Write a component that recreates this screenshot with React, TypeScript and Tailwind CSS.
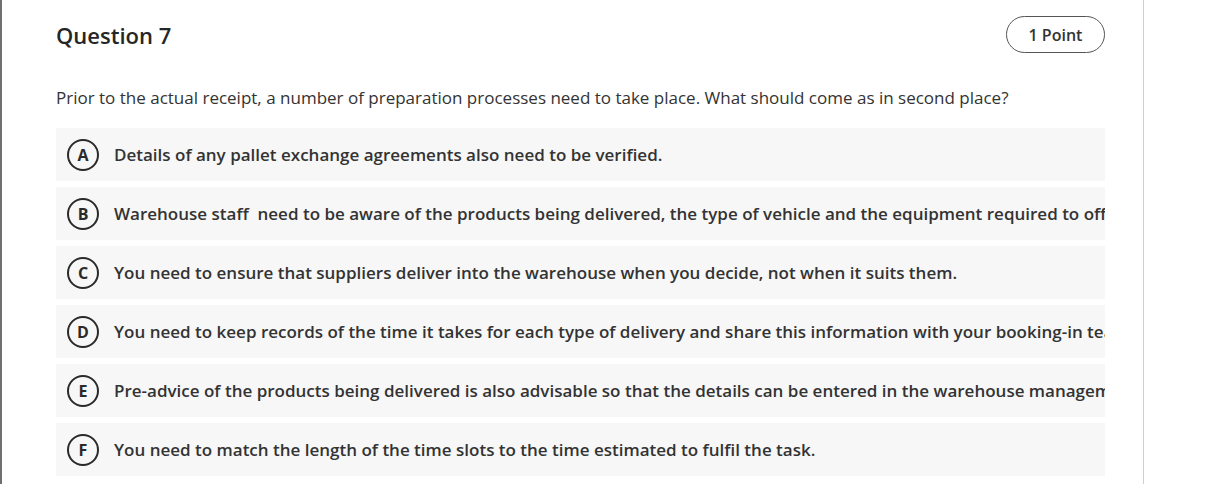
import React from 'react';

const options = [
  { letter: 'A', text: 'Details of any pallet exchange agreements also need to be verified.' },
  {
    letter: 'B',
    text: 'Warehouse staff \u00a0need to be aware of the products being delivered, the type of vehicle and the equipment required to offload it.',
  },
  { letter: 'C', text: 'You need to ensure that suppliers deliver into the warehouse when you decide, not when it suits them.' },
  {
    letter: 'D',
    text: 'You need to keep records of the time it takes for each type of delivery and share this information with your booking-in team.',
  },
  {
    letter: 'E',
    text: 'Pre-advice of the products being delivered is also advisable so that the details can be entered in the warehouse management system.',
  },
  { letter: 'F', text: 'You need to match the length of the time slots to the time estimated to fulfil the task.' },
];

export default function App() {
  return (
    <div
      className="flex h-[484px] w-[1206px] overflow-hidden border-l-2 border-[#6f6f6f] bg-white text-[#333]"
      style={{ fontFamily: '"Open Sans", "Liberation Sans", sans-serif' }}
    >
      <section className="w-[1142px] shrink-0 border-r border-[#cfcfcf] pl-[54px] pr-[38px] pt-[16px]">
        {/* header */}
        <div className="flex h-[37px] items-center justify-between">
          <h2 className="mt-[2px] text-[22px] font-semibold text-[#262626]">Question 7</h2>
          <span className="flex h-[37px] w-[99px] items-center justify-center rounded-full border-[1.5px] border-[#555] text-[16px] font-semibold text-[#333]">
            1 Point
          </span>
        </div>

        <p className="mt-[33px] text-[17px] leading-6 text-[#333]">
          Prior to the actual receipt, a number of preparation processes need to take place. What should come as in
          second place?
        </p>

        <ul className="mt-[18px] flex flex-col gap-[6px]">
          {options.map((o) => (
            <li
              key={o.letter}
              className="flex h-[53px] items-center overflow-hidden whitespace-nowrap bg-[#f7f7f7] pl-[11px]"
            >
              <span className="flex h-[32px] w-[32px] shrink-0 items-center justify-center rounded-full border-[2.5px] border-[#2a2a2a] text-[16px] leading-none font-bold text-[#2a2a2a]">
                {o.letter}
              </span>
              <span className="ml-[15px] text-[17px] font-semibold text-[#333]">{o.text}</span>
            </li>
          ))}
        </ul>
      </section>
    </div>
  );
}
